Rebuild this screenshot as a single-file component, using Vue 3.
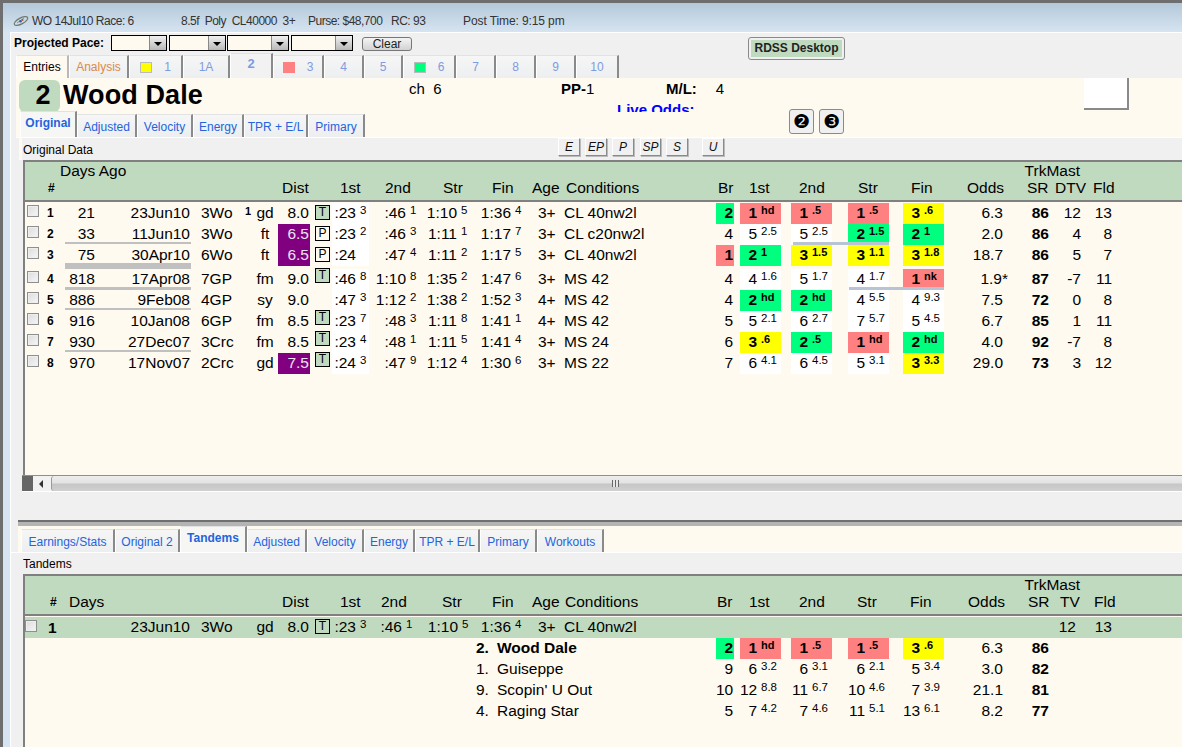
<script setup>
const topTabs = [
  { label: 'Entries', w: 53, kind: 'plain' },
  { label: 'Analysis', w: 60, kind: 'orange' },
  { label: '1', w: 54, sq: 'yellow' },
  { label: '1A', w: 47 },
  { label: '2', w: 43, active: true },
  { label: '3', w: 51, sq: 'red' },
  { label: '4', w: 40 },
  { label: '5', w: 39 },
  { label: '6', w: 53, sq: 'green' },
  { label: '7', w: 40 },
  { label: '8', w: 40 },
  { label: '9', w: 40 },
  { label: '10', w: 43 }
]

const upperTabs = [
  { label: 'Original', w: 57, active: true },
  { label: 'Adjusted', w: 60 },
  { label: 'Velocity', w: 56 },
  { label: 'Energy', w: 51 },
  { label: 'TPR + E/L', w: 64 },
  { label: 'Primary', w: 57 }
]

const lowerTabs = [
  { label: 'Earnings/Stats', w: 94 },
  { label: 'Original 2', w: 65 },
  { label: 'Tandems', w: 67, active: true },
  { label: 'Adjusted', w: 60 },
  { label: 'Velocity', w: 57 },
  { label: 'Energy', w: 51 },
  { label: 'TPR + E/L', w: 65 },
  { label: 'Primary', w: 57 },
  { label: 'Workouts', w: 67 }
]

const paceButtons = [
  { label: 'E', w: 22, gap: 0 },
  { label: 'EP', w: 22, gap: 5 },
  { label: 'P', w: 22, gap: 5 },
  { label: 'SP', w: 21, gap: 6 },
  { label: 'S', w: 22, gap: 5 },
  { label: 'U', w: 22, gap: 14 }
]

const pair = (s) => {
  const [main, sup, color] = s.split('|')
  return { main, sup, color }
}

// strings are main|sup|colour, same as the grid order on screen
const row = (n, days, date, track, mark, surf, dist, purple, box, times, age, cond, br, calls, odds, sr, dtv, fld, rule) => ({
  n, days, date, track, mark, surf, dist, purple, box, age, cond, odds, sr, dtv, fld, rule,
  times: times.map(pair),
  br: pair(br),
  calls: calls.map(pair)
})

const races = [
  row(1, '21', '23Jun10', '3Wo', '1', 'gd', '8.0', false, 'T', ['23|3', '46|1', '1:10|5', '1:36|4'], '3+', 'CL 40nw2l', '2||g', ['1|hd|r', '1|.5|r', '1|.5|r', '3|.6|y'], '6.3', '86', '12', '13', ''),
  row(2, '33', '11Jun10', '3Wo', '', 'ft', '6.5', true, 'P', ['23|2', '46|3', '1:11|1', '1:17|7'], '3+', 'CL c20nw2l', '4', ['5|2.5', '5|2.5', '2|1.5|g', '2|1|g'], '2.0', '86', '4', '8', 'two'),
  row(3, '75', '30Apr10', '6Wo', '', 'ft', '6.5', true, 'P', ['24|', '47|4', '1:11|2', '1:17|5'], '3+', 'CL 40nw2l', '1||r', ['2|1|g', '3|1.5|y', '3|1.1|y', '3|1.8|y'], '18.7', '86', '5', '7', 'thick'),
  row(4, '818', '17Apr08', '7GP', '', 'fm', '9.0', false, 'T', ['46|8', '1:10|8', '1:35|2', '1:47|6'], '3+', 'MS 42', '4', ['4|1.6', '5|1.7', '4|1.7', '1|nk|r'], '1.9*', '87', '-7', '11', 'four'),
  row(5, '886', '9Feb08', '4GP', '', 'sy', '9.0', false, '', ['47|3', '1:12|2', '1:38|2', '1:52|3'], '4+', 'MS 42', '4', ['2|hd|g', '2|hd|g', '4|5.5', '4|9.3'], '7.5', '72', '0', '8', 'thin'),
  row(6, '916', '10Jan08', '6GP', '', 'fm', '8.5', false, 'T', ['23|7', '48|3', '1:11|8', '1:41|1'], '4+', 'MS 42', '5', ['5|2.1', '6|2.7', '7|5.7', '5|4.5'], '6.7', '85', '1', '11', ''),
  row(7, '930', '27Dec07', '3Crc', '', 'fm', '8.5', false, 'T', ['23|4', '48|1', '1:11|5', '1:41|4'], '3+', 'MS 24', '6', ['3|.6|y', '2|.5|g', '1|hd|r', '2|hd|g'], '4.0', '92', '-7', '8', 'thin'),
  row(8, '970', '17Nov07', '2Crc', '', 'gd', '7.5', true, 'T', ['24|3', '47|9', '1:12|4', '1:30|6'], '3+', 'MS 22', '7', ['6|4.1', '6|4.5', '5|3.1', '3|3.3|y'], '29.0', '73', '3', '12', '')
]

const tandemTimes = ['23|3', '46|1', '1:10|5', '1:36|4'].map(pair)

const tandems = [
  { pos: '2.', name: 'Wood Dale', bold: true, br: pair('2||g'), calls: ['1|hd|r', '1|.5|r', '1|.5|r', '3|.6|y'].map(pair), odds: '6.3', sr: '86' },
  { pos: '1.', name: 'Guiseppe', br: pair('9'), calls: ['6|3.2', '6|3.1', '6|2.1', '5|3.4'].map(pair), odds: '3.0', sr: '82' },
  { pos: '9.', name: "Scopin' U Out", br: pair('10'), calls: ['12|8.8', '11|6.7', '10|4.6', '7|3.9'].map(pair), odds: '21.1', sr: '81' },
  { pos: '4.', name: 'Raging Star', br: pair('5'), calls: ['7|4.2', '7|4.6', '11|5.1', '13|6.1'].map(pair), odds: '8.2', sr: '77' }
]

const upperHead = ['Dist', '1st', '2nd', 'Str', 'Fin', 'Age', 'Conditions', 'Br', '1st', '2nd', 'Str', 'Fin', 'Odds', 'SR', 'DTV', 'Fld']
const lowerHead = ['Days', 'Dist', '1st', '2nd', 'Str', 'Fin', 'Age', 'Conditions', 'Br', '1st', '2nd', 'Str', 'Fin', 'Odds', 'SR', 'TV', 'Fld']
</script>

<template>
  <div class="window">
    <header class="titlebar">
      <svg class="logo" width="16" height="14" viewBox="0 0 16 14">
        <ellipse cx="8" cy="7" rx="7.5" ry="3" transform="rotate(-28 8 7)" fill="none" stroke="#6f7a70" stroke-width="1.2" />
        <path d="M4 9 L11 4" stroke="#8a9488" stroke-width="1" />
        <circle cx="7.5" cy="7.2" r="1.3" fill="#3c5fb0" />
        <circle cx="9.5" cy="6" r="1" fill="#b05040" />
      </svg>
      <span class="t-race">WO 14Jul10 Race: 6</span>
      <span class="t-cond">8.5f&nbsp; Poly&nbsp; CL40000&nbsp; 3+</span>
      <span class="t-purse">Purse: $48,700</span>
      <span class="t-rc">RC: 93</span>
      <span class="t-post">Post Time: 9:15 pm</span>
    </header>

    <div class="body">
      <div class="pace-row">
        <b class="pace-label">Projected Pace:</b>
        <div class="combo w56"><i class="combo-btn"></i></div>
        <div class="combo w57"><i class="combo-btn"></i></div>
        <div class="combo w62"><i class="combo-btn"></i></div>
        <div class="combo w62"><i class="combo-btn"></i></div>
        <button class="clear">Clear</button>
        <button class="rdss"><span>RDSS Desktop</span></button>
      </div>

      <nav class="top-tabs">
        <div
          v-for="t in topTabs"
          :key="t.label"
          class="tab top-tab"
          :class="[t.kind, { active: t.active }]"
          :style="{ width: t.w + 'px' }"
        >
          <i v-if="t.sq" class="sq" :class="t.sq"></i>
          <span>{{ t.label }}</span>
        </div>
      </nav>

      <section class="horse-panel">
        <div class="horse">
          <div class="saddle">2</div>
          <div class="horse-name">Wood Dale</div>
          <div class="info">
            <span>ch&nbsp; 6</span>
            <span><b>PP-</b>1</span>
            <span><b class="ml">M/L:</b>4</span>
            <b class="live">Live Odds:</b>
          </div>
          <div class="silk"></div>
        </div>
        <div class="sub-row">
          <nav class="sub-tabs">
            <div
              v-for="t in upperTabs"
              :key="t.label"
              class="tab sub-tab"
              :class="{ active: t.active }"
              :style="{ width: t.w + 'px' }"
            >{{ t.label }}</div>
          </nav>
          <div class="circle-btns">
            <button class="circle">❷</button>
            <button class="circle">❸</button>
          </div>
        </div>
      </section>

      <div class="caption upper-caption">
        <span>Original Data</span>
        <div class="pace-btns">
          <button
            v-for="b in paceButtons"
            :key="b.label"
            class="pace-btn"
            :style="{ width: b.w + 'px', marginLeft: b.gap + 'px' }"
          >{{ b.label }}</button>
        </div>
      </div>

      <section class="table upper">
        <div class="thead">
          <div class="head-top">
            <span class="days-ago">Days Ago</span>
            <span class="trkmast">TrkMast</span>
          </div>
          <div class="head-labels upper-labels">
            <b class="hash">#</b>
            <span v-for="(h, i) in upperHead" :key="i">{{ h }}</span>
          </div>
        </div>

        <div class="rows">
          <div v-for="r in races" :key="r.n" class="row" :class="{ gap: r.n === 4, late: r.n > 3 }">
            <i class="check"></i>
            <b class="num">{{ r.n }}</b>
            <span class="right">{{ r.days }}</span>
            <span class="right date">{{ r.date }}</span>
            <span class="track">{{ r.track }}</span>
            <b class="mark">{{ r.mark }}</b>
            <span class="surf">{{ r.surf }}</span>
            <span class="dist" :class="{ purple: r.purple }">{{ r.dist }}</span>
            <span class="box-cell">
              <i v-if="r.box" class="box" :class="r.box === 'T' ? 'turf' : 'poly'">{{ r.box }}</i>
            </span>
            <span
              v-for="(t, i) in r.times"
              :key="i"
              class="time"
              :class="['t' + i, { white: i === 0 }]"
            >
              <span class="time-main">{{ t.main.includes(':') ? t.main : ':' + t.main }}</span>
              <sup class="up">{{ t.sup }}</sup>
            </span>
            <span class="age">{{ r.age }}</span>
            <span class="cond">{{ r.cond }}</span>
            <span class="br" :class="r.br.color">{{ r.br.main }}</span>
            <span v-for="(c, i) in r.calls" :key="i" class="call-slot">
              <span class="call" :class="c.color || 'white'">
                <span class="call-main">{{ c.main }}</span>
                <sup class="up">{{ c.sup }}</sup>
              </span>
            </span>
            <span class="right odds"><span :class="{ star: r.odds.includes('*') }">{{ r.odds }}</span></span>
            <b class="right sr">{{ r.sr }}</b>
            <span class="right">{{ r.dtv }}</span>
            <span class="right">{{ r.fld }}</span>
            <i v-if="r.rule" class="rule date-rule" :class="r.rule"></i>
            <i v-if="r.rule === 'two' || r.rule === 'four'" class="rule call-rule" :class="r.rule"></i>
          </div>
        </div>
      </section>

      <div class="scrollbar">
        <i class="sb-corner"></i>
        <i class="sb-arrow"></i>
        <div class="sb-thumb"><i class="grip"></i></div>
      </div>
      <div class="spacer"></div>
      <div class="splitter"></div>

      <nav class="lower-tabs">
        <div
          v-for="t in lowerTabs"
          :key="t.label"
          class="tab sub-tab"
          :class="{ active: t.active }"
          :style="{ width: t.w + 'px' }"
        >{{ t.label }}</div>
      </nav>

      <div class="caption lower-caption">
        <span>Tandems</span>
      </div>

      <section class="table lower">
        <div class="thead">
          <div class="head-top">
            <span class="trkmast">TrkMast</span>
          </div>
          <div class="head-labels lower-labels">
            <b class="hash">#</b>
            <span v-for="(h, i) in lowerHead" :key="i">{{ h }}</span>
          </div>
        </div>

        <div class="row tandem-head">
          <i class="check"></i>
          <b class="num big">1</b>
          <span></span>
          <span class="right date">23Jun10</span>
          <span class="track">3Wo</span>
          <b class="mark"></b>
          <span class="surf">gd</span>
          <span class="dist">8.0</span>
          <span class="box-cell"><i class="box outline">T</i></span>
          <span v-for="(t, i) in tandemTimes" :key="i" class="time" :class="'t' + i">
            <span class="time-main">{{ t.main.includes(':') ? t.main : ':' + t.main }}</span>
            <sup class="up">{{ t.sup }}</sup>
          </span>
          <span class="age">3+</span>
          <span class="cond">CL 40nw2l</span>
          <span class="tv">12</span>
          <span class="right fld-l">13</span>
        </div>

        <div v-for="h in tandems" :key="h.name" class="row tandem" :class="{ strong: h.bold }">
          <div class="entrant"><span class="pos">{{ h.pos }}</span><span>{{ h.name }}</span></div>
          <span class="br" :class="h.br.color">{{ h.br.main }}</span>
          <span v-for="(c, i) in h.calls" :key="i" class="call-slot" :class="'c' + i">
            <span class="call" :class="c.color">
              <span class="call-main">{{ c.main }}</span>
              <sup class="up">{{ c.sup }}</sup>
            </span>
          </span>
          <span class="right odds">{{ h.odds }}</span>
          <b class="right sr">{{ h.sr }}</b>
        </div>
      </section>
    </div>
  </div>
</template>

<style>
html, body {
  margin: 0;
  overflow: hidden;
}
</style>

<style scoped>
.window {
  box-sizing: border-box;
  width: 1182px;
  height: 747px;
  overflow: hidden;
  display: flex;
  flex-direction: column;
  border-top: 3px solid #6e6e6e;
  border-left: 3px solid #6e6e6e;
  background: #d6e4f1;
  font-family: "Liberation Sans", Arial, sans-serif;
  font-size: 15.5px;
  color: #000;
}

.titlebar {
  height: 29px;
  flex: none;
  display: flex;
  align-items: center;
  font-size: 12px;
  letter-spacing: -0.5px;
  color: #333;
  padding-top: 7px;
  box-sizing: border-box;
  background: linear-gradient(#b4c8da, #d6e4f1);
}

.logo { margin-left: 10px; width: 16px; flex: none; }
.t-race { margin-left: 3px; width: 149px; }
.t-cond { width: 127px; }
.t-purse { width: 83px; }
.t-rc { width: 72px; }
.t-post { letter-spacing: -0.1px; }

.body {
  flex: 1;
  margin-left: 7px;
  min-height: 0;
  display: flex;
  flex-direction: column;
  background: #f0f0f0;
  border-top: 1px solid #fff;
  border-left: 1px solid #fff;
}

.pace-row {
  height: 21px;
  flex: none;
  display: flex;
  align-items: flex-start;
  padding-left: 3px;
  padding-top: 2px;
  box-sizing: border-box;
}

.pace-label {
  width: 97px;
  font-size: 12px;
  line-height: 16px;
}

.combo {
  box-sizing: border-box;
  height: 16px;
  margin-right: 2px;
  border: 1px solid #000;
  background: #fffaf0;
  display: flex;
  justify-content: flex-end;
}

.w56 { width: 56px; }
.w57 { width: 57px; margin-right: 1px; }
.w62 { width: 62px; }

.combo-btn {
  width: 16px;
  background: linear-gradient(#f0f0f0, #b8b8b8);
  border-left: 1px solid #888;
  position: relative;
}

.combo-btn::after {
  content: '';
  position: absolute;
  left: 4px;
  top: 6px;
  border: 4px solid transparent;
  border-top: 4px solid #000;
}

.clear {
  box-sizing: border-box;
  width: 50px;
  height: 14px;
  margin: 2px 0 0 7px;
  padding: 0;
  border: 1px solid #777;
  border-radius: 3px;
  background: linear-gradient(#f4f4f4, #d2d2d2);
  font: 12px/12px "Liberation Sans", Arial, sans-serif;
  color: #222;
}

.rdss {
  box-sizing: border-box;
  width: 97px;
  height: 23px;
  margin: 2px 0 0 336px;
  padding: 2px;
  border: 1px solid #8a8a8a;
  border-radius: 3px;
  background: #f0f0f0;
  font: bold 12px "Liberation Sans", Arial, sans-serif;
  color: #222;
  flex: none;
  position: relative;
}

.rdss span {
  display: block;
  height: 100%;
  line-height: 17px;
  background: #c0dac0;
}

.top-tabs {
  height: 24px;
  flex: none;
  display: flex;
  align-items: flex-end;
  padding-left: 5px;
}

.tab {
  box-sizing: border-box;
  flex: none;
  display: flex;
  align-items: center;
  justify-content: center;
  font-size: 12px;
  background: linear-gradient(#f6f6f6, #eceef0);
  border-top: 1px solid #e2e2e2;
  border-left: 1px solid #fff;
  border-right: 2px solid #8a8a8a;
}

.top-tab {
  height: 23px;
  color: #7f9be0;
  gap: 8px;
}

.top-tab.plain { color: #000; background: #fffaf0; border-right-color: #b8b8b8; }
.top-tab.orange { color: #dc8a46; }
.top-tab.active {
  height: 25px;
  font-weight: bold;
  font-size: 13px;
  padding-bottom: 5px;
  background: #f2f2f2;
}

.sq {
  box-sizing: border-box;
  width: 12px;
  height: 11px;
  border: 1px solid #bbb;
  margin-right: 4px;
}

.sq.yellow { background: #ff0; }
.sq.red { background: #ff8080; border-color: #ff8080; }
.sq.green { background: #00ff7f; }

.horse-panel {
  height: 60px;
  flex: none;
  margin-left: 5px;
  display: flex;
  flex-direction: column;
  background: #fffaf0;
  border-bottom: 1px solid #fff;
  box-sizing: border-box;
}

.horse {
  height: 34px;
  flex: none;
  overflow: hidden;
  display: flex;
  padding: 2px 0 0 3px;
  box-sizing: border-box;
}

.saddle {
  box-sizing: border-box;
  width: 41px;
  height: 32px;
  padding-left: 7px;
  background: #c0dac0;
  border-radius: 6px;
  font: bold 27px/31px "Liberation Sans", Arial, sans-serif;
  text-align: center;
}

.horse-name {
  width: 346px;
  margin-left: 3px;
  font: bold 27px/31px "Liberation Sans", Arial, sans-serif;
  letter-spacing: 0.1px;
}

.info {
  width: 321px;
  flex: none;
  display: grid;
  grid-template-columns: 152px 105px 1fr;
  grid-auto-rows: 21px;
  font-size: 15px;
  line-height: 17px;
}

.info b { font-weight: bold; }
.ml { margin-right: 19px; }

.live {
  grid-column: 2 / 4;
  margin-left: 56px;
  color: #00f;
}

.silk {
  box-sizing: border-box;
  width: 45px;
  height: 32px;
  margin: -2px 53px 0 auto;
  background: #fff;
  border-right: 2px solid #8a8a8a;
  border-bottom: 2px solid #8a8a8a;
}

.sub-row {
  height: 25px;
  flex: none;
  display: flex;
  align-items: flex-end;
  padding-left: 4px;
}

.sub-tabs,
.lower-tabs {
  display: flex;
  align-items: flex-end;
}

.sub-tab {
  height: 23px;
  color: #2464dc;
  padding-top: 1px;
}

.sub-tab.active {
  height: 26px;
  font-weight: bold;
  padding-bottom: 5px;
  background: #f6f7f4;
}

.circle-btns {
  display: flex;
  gap: 5px;
  margin: -3px 0 0 424px;
  align-self: flex-start;
}

.circle {
  box-sizing: border-box;
  width: 25px;
  height: 25px;
  padding: 0;
  border: 1px solid #8a8a8a;
  border-radius: 3px;
  background: #f0f0f0;
  font: 19px/21px "DejaVu Sans", sans-serif;
  color: #000;
}

.caption {
  flex: none;
  display: flex;
  align-items: center;
  box-sizing: border-box;
  font-size: 12px;
}

.upper-caption {
  height: 22px;
  margin-left: 8px;
  padding-left: 1px;
  padding-top: 1px;
  border-left: 3px solid #fffaf0;
}

.lower-caption {
  height: 22px;
  padding-left: 12px;
  border-top: 1px solid #fff;
}

.pace-btns {
  display: flex;
  margin-left: 465px;
  padding-bottom: 5px;
}

.pace-btn {
  box-sizing: border-box;
  height: 18px;
  padding: 0;
  font: italic 12px/16px "Liberation Sans", Arial, sans-serif;
  color: #111;
  background: #f0f0f0;
  border: 1px solid;
  border-color: #fff #8a8a8a #8a8a8a #fff;
  box-shadow: 1px 1px 0 #bbb;
}

.table {
  margin-left: 12px;
  display: flex;
  flex-direction: column;
  background: #fffaf0;
  border-left: 2px solid #808080;
  border-top: 2px solid #808080;
}

.upper {
  height: 316px;
  box-sizing: border-box;
  flex: none;
}

.lower {
  flex: 1;
  min-height: 0;
}

.thead {
  height: 38px;
  flex: none;
  background: #c0dac0;
  border-bottom: 2px solid #808080;
  margin-bottom: 1px;
}

.head-top {
  height: 17px;
  line-height: 17px;
  display: flex;
}

.days-ago { margin-left: 35px; }
.trkmast { margin-left: auto; margin-right: 102px; }

.head-labels {
  display: grid;
  line-height: 18px;
}

.upper-labels {
  padding-left: 23px;
  grid-template-columns: 234px 58px 45px 58px 49px 40px 34px 152px 31px 50px 59px 53px 56px 60px 28px 38px 1fr;
}

.lower-labels {
  padding-left: 25px;
  grid-template-columns: 19px 213px 58px 41px 61px 50px 40px 33px 152px 32px 50px 58px 53px 58px 60px 32px 34px 1fr;
}

.hash { font-size: 12px; }

.rows { display: flex; flex-direction: column; }

.row {
  position: relative;
  display: grid;
  grid-template-columns: 15px 25px 30px 96px 52px 9px 26px 32px 22px 37px 54px 53px 54px 34px 152px 18px 47px 51px 57px 55px 59px 46px 32px 31px 1fr;
  height: 21px;
  line-height: 19px;
  flex: none;
}

.row.gap { margin-top: 3px; }

.row > * { grid-row: 1; }

.right { text-align: right; display: block; }
.date { padding-right: 1px; }

.check {
  box-sizing: border-box;
  width: 12px;
  height: 12px;
  margin: 2px 0 0 2px;
  border: 1px solid #8e8f8f;
  background: linear-gradient(135deg, #dcdcdc, #f6f6f6);
  box-shadow: inset 0 0 0 1px #eee;
}

.num {
  font-size: 12px;
  line-height: 21px;
  padding-left: 7px;
}

.num.big { font-size: 15.5px; padding-left: 8px; }

.track { padding-left: 10px; }
.mark { font-size: 11px; line-height: 17px; padding-left: 2px; }
.surf { text-align: center; }

.dist { text-align: right; padding-right: 1px; }
.dist.purple { background: #800080; color: #e8e4ee; }

.box-cell { display: block; }

.box {
  display: block;
  box-sizing: border-box;
  width: 15px;
  height: 15px;
  margin: 2px 0 0 5px;
  border: 1px solid #000;
  font: 12px/13px "Liberation Sans", Arial, sans-serif;
  text-align: center;
}

.late .box { margin-top: -1px; }
.turf { background: #c0dac0; }
.poly { background: #fffaf0; }

.time { display: flex; }
.time.white { background: #fff; height: 21px; }
.time-main { text-align: right; flex: none; }
.t0 .time-main { width: 24px; }
.t1 .time-main { width: 37px; }
.t2 .time-main { width: 34px; }
.t3 .time-main { width: 35px; }

.up {
  font-size: 11.5px;
  line-height: 15px;
  vertical-align: baseline;
  margin-left: 4px;
}

.age { padding-left: 8px; }

.br {
  text-align: right;
  padding-right: 1px;
}

.call-slot { display: flex; justify-content: flex-end; }

.call {
  display: flex;
  width: 41px;
  height: 21px;
}

.call-main {
  width: 17px;
  text-align: right;
  flex: none;
}

.white { background: #fff; }
.g, .r, .y { font-weight: bold; }
.g .up, .r .up, .y .up { font-size: 11px; font-weight: bold; }
.g { background: #00ff7f; }
.r { background: #ff8080; }
.y { background: #ff0; }

.star { margin-right: -5px; }
.odds { display: block; }
.sr { font-weight: bold; }

/* rules between races sit over the cells */
.rule {
  position: absolute;
  height: 2px;
  bottom: 1px;
  background: #c0c0c0;
}

.date-rule { left: 40px; width: 126px; }
.date-rule.thick { height: 6px; bottom: -3px; }
.date-rule.four { height: 3px; bottom: 0; }

.call-rule { height: 3px; bottom: 0; background: #b8c4d4; }
.call-rule.two { left: 768px; width: 96px; }
.call-rule.four { left: 824px; width: 95px; }

.scrollbar {
  height: 15px;
  flex: none;
  margin-left: 11px;
  margin-top: -1px;
  display: flex;
  align-items: stretch;
  border-top: 1px solid #8f8f8f;
  border-bottom: 1px solid #fff;
  background: #f2f2f2;
}

.sb-corner { width: 11px; background: #666; flex: none; }

.sb-arrow {
  width: 18px;
  flex: none;
  position: relative;
}

.sb-arrow::after {
  content: '';
  position: absolute;
  left: 6px;
  top: 4px;
  border: 4px solid transparent;
  border-right: 4px solid #333;
  border-left: 0;
}

.sb-thumb {
  flex: 1;
  display: flex;
  align-items: center;
  justify-content: center;
  border-radius: 3px 0 0 3px;
  border-left: 1px solid #999;
  background: linear-gradient(#ededed 0%, #e3e3e3 45%, #c6c6c6 55%, #d0d0d0 100%);
  padding-right: 4px;
}

.grip {
  width: 7px;
  height: 7px;
  background: repeating-linear-gradient(90deg, #666 0 1px, #e6e6e6 1px 3px);
}

.spacer {
  height: 28px;
  flex: none;
}

.splitter {
  height: 6px;
  flex: none;
  margin-left: 7px;
  background: linear-gradient(#6f6f6f 0 2px, #b4b4b4 2px 100%);
}

.lower-tabs {
  height: 26px;
  flex: none;
  margin-left: 7px;
  padding-left: 3px;
  background: #fffaf0;
}

.tandem-head {
  background: #c0dac0;
}

.tandem-head .check { margin-left: 0; margin-top: 3px; }
.tandem-head .box { background: transparent; margin-top: 2px; }
.tandem-head .t1 .time-main { width: 33px; }
.tandem-head .t2 .time-main { width: 35px; }

.tv {
  grid-column: 22 / 24;
  text-align: right;
  padding-right: 5px;
}

.fld-l { grid-column: 24; }

.entrant {
  grid-column: 13 / 16;
  display: flex;
}

.pos { width: 21px; flex: none; }
.strong .entrant { font-weight: bold; }
.tandem .br { grid-column: 16; }
.tandem .c0 { grid-column: 17; }
.tandem .c1 { grid-column: 18; }
.tandem .c2 { grid-column: 19; }
.tandem .c3 { grid-column: 20; }
.tandem .odds { grid-column: 21; }
.tandem .sr { grid-column: 22; }
</style>
